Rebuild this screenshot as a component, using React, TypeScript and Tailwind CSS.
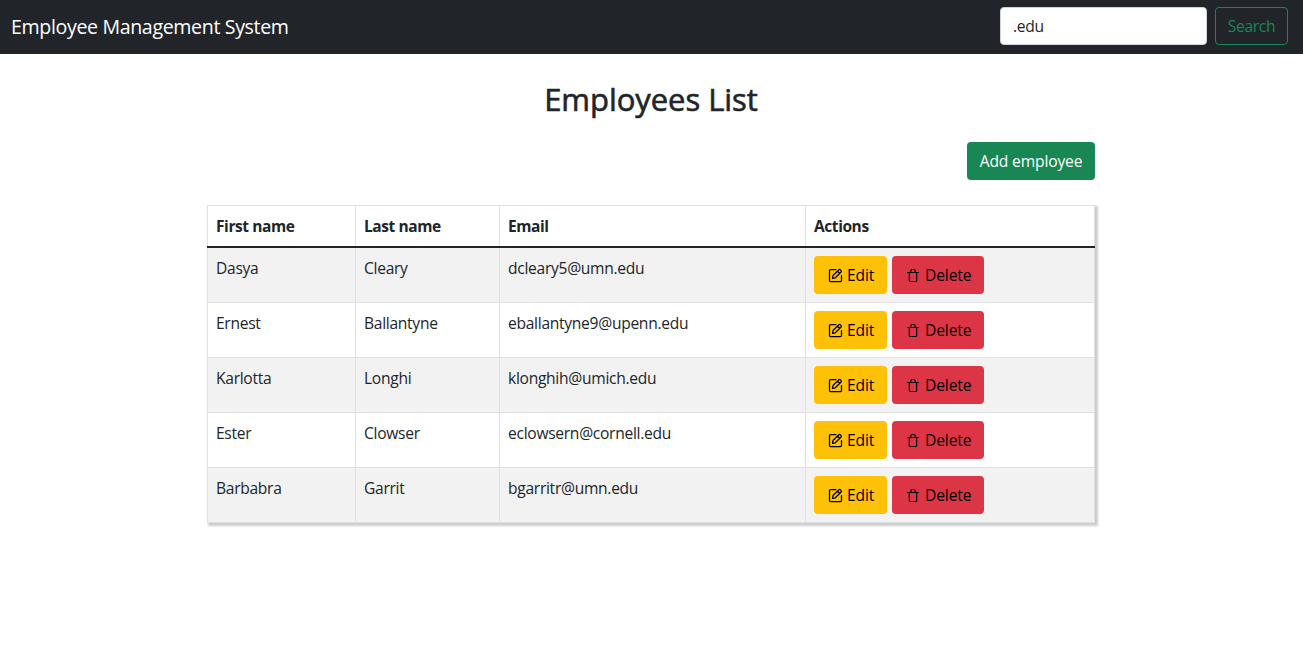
import React from "react";

type Employee = { first: string; last: string; email: string };

const employees: Employee[] = [
  { first: "Dasya", last: "Cleary", email: "dcleary5@umn.edu" },
  { first: "Ernest", last: "Ballantyne", email: "eballantyne9@upenn.edu" },
  { first: "Karlotta", last: "Longhi", email: "klonghih@umich.edu" },
  { first: "Ester", last: "Clowser", email: "eclowsern@cornell.edu" },
  { first: "Barbabra", last: "Garrit", email: "bgarritr@umn.edu" },
];

function EditIcon() {
  return (
    <svg
      className="size-4 shrink-0"
      viewBox="0 0 16 16"
      fill="none"
      stroke="currentColor"
      strokeWidth="1.25"
      strokeLinejoin="round"
      strokeLinecap="round"
    >
      <path d="M9 2.5H3.5a1 1 0 0 0-1 1v10a1 1 0 0 0 1 1h10a1 1 0 0 0 1-1V8.5" />
      <path d="M5.5 11.3l.5-2.8 5.9-5.7a1 1 0 0 1 1.4 0l.8.8a1 1 0 0 1 0 1.4L8.3 10.8zM10.6 4.2l2.1 2.1" />
    </svg>
  );
}

function TrashIcon() {
  return (
    <svg
      className="size-4 shrink-0"
      viewBox="0 0 16 16"
      fill="none"
      stroke="currentColor"
      strokeWidth="1.15"
      strokeLinejoin="round"
      strokeLinecap="round"
    >
      <path d="M2.6 5.5h10.8" />
      <path d="M4.3 5.7v7.8c0 .6.4 1 1 1h5.4c.6 0 1-.4 1-1V5.7M5.9 5.3V3.7c0-.7.5-1.2 1.2-1.2h1.8c.7 0 1.2.5 1.2 1.2v1.6" />
    </svg>
  );
}

export default function App() {
  return (
    <div className="min-h-screen bg-white font-['Open_Sans','Noto_Sans',sans-serif] text-[15.6px] leading-6 tracking-[-0.29px] text-[#212529]">
      <nav className="flex h-[54px] items-start justify-between bg-[#212529] pt-[7px] pr-[15px] pl-[11px]">
        <span className="pt-[5px] text-[19.6px] leading-[30px] tracking-[-0.36px] text-white">
          Employee Management System
        </span>
        <form className="flex gap-2" onSubmit={(e) => e.preventDefault()}>
          <input
            className="h-[38px] w-[207px] rounded border border-[#ced4da] bg-white px-3 text-[15.6px] tracking-[-0.3px] outline-none"
            defaultValue=".edu"
          />
          <button className="flex h-[38px] w-[73px] items-center justify-center rounded border border-[#198754] text-[#198754]">
            Search
          </button>
        </form>
      </nav>
      <main className="ml-[207px] w-[888px]">
        <h2 className="pt-[26px] text-center text-[31px] leading-[38px] font-medium tracking-[-0.05px] [-webkit-text-stroke:0.6px_#212529]">
          Employees List
        </h2>
        <div className="mt-6 flex justify-end">
          <button className="flex h-[38px] w-32 items-center justify-center rounded bg-[#198754] tracking-[-0.15px] text-white">
            Add employee
          </button>
        </div>
        <div className="mt-[25px] border-t border-l border-[#dee2e6] shadow-[2px_2px_2px_1px_rgba(0,0,0,0.2)]">
          <div className="-ml-px grid h-[42px] grid-cols-[149px_144px_306px_289px] border-b-2 border-[#212529] text-[15.5px] font-bold tracking-[-0.42px]">
            {["First name", "Last name", "Email", "Actions"].map((h) => (
              <div key={h} className="border-r border-[#dee2e6] px-2 pt-2 leading-6 first:border-l">
                {h}
              </div>
            ))}
          </div>
          {employees.map((e) => (
            <div
              key={e.email}
              className="grid h-[55px] grid-cols-[148px_144px_306px_289px] odd:bg-white even:bg-[#f2f2f2]"
            >
              {[e.first, e.last, e.email].map((t) => (
                <div key={t} className="border-r border-b border-[#dee2e6] px-2 pt-2 leading-6">
                  {t}
                </div>
              ))}
              <div className="flex gap-[5px] border-r border-b border-[#dee2e6] px-2 pt-2 tracking-[-0.1px] text-black">
                <button className="flex h-[38px] w-[73px] items-center gap-1 rounded bg-[#ffc107] pl-[13px]">
                  <EditIcon />
                  <span>Edit</span>
                </button>
                <button className="flex h-[38px] w-[92px] items-center gap-1 rounded bg-[#dc3545] pl-[13px]">
                  <TrashIcon />
                  <span>Delete</span>
                </button>
              </div>
            </div>
          ))}
        </div>
      </main>
    </div>
  );
}
